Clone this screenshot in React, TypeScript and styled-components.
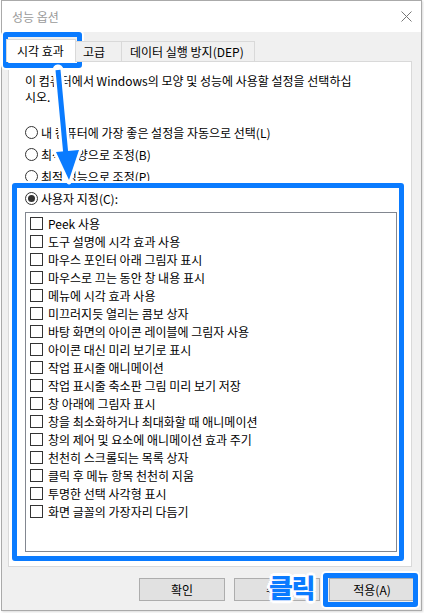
import React from 'react'
import styled, { createGlobalStyle } from 'styled-components'

const GlobalStyle = createGlobalStyle`
  html, body {
    margin: 0;
    padding: 0;
    background: #ffffff;
  }
  body {
    font-family: "Noto Sans CJK KR", "Noto Sans", sans-serif;
    font-size: 12px;
    color: #000;
  }
`

const BLUE = '#0a7bff'

const Page = styled.div`
  position: relative;
  width: 424px;
  height: 613px;
  overflow: hidden;
`

const Window = styled.div`
  box-sizing: border-box;
  margin-left: 1px;
  width: 421px;
  height: 611px;
  border: 1px solid #aaaaaa;
  display: flex;
  flex-direction: column;
  background: #f0f0f0;
  box-shadow: 1px 1px 2px rgba(0, 0, 0, 0.15);
`

const TitleBar = styled.div`
  height: 31px;
  background: #ffffff;
  display: flex;
  align-items: center;
  justify-content: space-between;
  padding: 0 9px 0 10px;
`

const Title = styled.span`
  color: #9a9a9a;
  font-size: 12px;
`

const Body = styled.div`
  flex: 1;
  display: flex;
  flex-direction: column;
  padding: 8px 9px 0 6px;
`

const Tabs = styled.div`
  display: flex;
  align-items: flex-end;
  height: 22px;
  margin-bottom: -1px;
  position: relative;
  z-index: 1;
`

const Tab = styled.div<{ $w: number; $pad: number; $active?: boolean }>`
  box-sizing: border-box;
  width: ${p => p.$w}px;
  height: ${p => (p.$active ? 23 : 21)}px;
  margin-left: ${p => (p.$active ? -2 : -1)}px;
  border: 1px solid #d9d9d9;
  border-bottom: ${p => (p.$active ? 'none' : '1px solid #d9d9d9')};
  background: ${p => (p.$active ? '#ffffff' : '#f0f0f0')};
  display: flex;
  align-items: center;
  padding: 0 0 ${p => (p.$active ? 2 : 0)}px ${p => p.$pad}px;
  white-space: nowrap;
  &:first-child {
    margin-left: -2px;
  }
`

const Panel = styled.div`
  box-sizing: border-box;
  height: 506px;
  background: #ffffff;
  border: 1px solid #d9d9d9;
  padding: 11px 14px 0 16px;
  display: flex;
  flex-direction: column;
`

const Desc = styled.p`
  margin: 0;
  line-height: 16px;
`

const RadioGroup = styled.div`
  margin-top: 16px;
  display: flex;
  flex-direction: column;
`

const RadioRow = styled.label`
  height: 22px;
  display: flex;
  align-items: center;
  gap: 3px;
  white-space: nowrap;
`

const RadioDot = styled.span<{ $checked?: boolean }>`
  box-sizing: border-box;
  width: 13px;
  height: 13px;
  border-radius: 50%;
  border: 1px solid #333333;
  background: #ffffff;
  display: flex;
  align-items: center;
  justify-content: center;
  flex-shrink: 0;
  &::after {
    content: '';
    width: 7px;
    height: 7px;
    border-radius: 50%;
    background: ${p => (p.$checked ? '#333333' : 'transparent')};
  }
`

const ListBox = styled.div`
  box-sizing: border-box;
  margin-top: 3px;
  width: 372px;
  height: 340px;
  border: 1px solid #828790;
  padding: 1px 0 0 4px;
  display: flex;
  flex-direction: column;
`

const CheckRow = styled.div`
  height: 18px;
  display: flex;
  align-items: center;
  gap: 5px;
  white-space: nowrap;
`

const CheckBox = styled.span`
  box-sizing: border-box;
  width: 13px;
  height: 13px;
  border: 1px solid #333333;
  background: #ffffff;
  flex-shrink: 0;
`

const Buttons = styled.div`
  display: flex;
  justify-content: flex-end;
  gap: 9px;
  margin-top: 11px;
  margin-right: -3px;
`

const Button = styled.div`
  box-sizing: border-box;
  width: 86px;
  height: 23px;
  background: #e1e1e1;
  border: 1px solid #adadad;
  display: flex;
  align-items: center;
  justify-content: center;
`

const Mark = styled.div<{ $x: number; $y: number; $w: number; $h: number }>`
  position: absolute;
  left: ${p => p.$x}px;
  top: ${p => p.$y}px;
  width: ${p => p.$w}px;
  height: ${p => p.$h}px;
  box-sizing: border-box;
  border: 5px solid ${BLUE};
  border-radius: 3px;
  box-shadow: 0 0 0 2px #ffffff;
  pointer-events: none;
`

const ClickLabel = styled.span`
  position: absolute;
  left: 269px;
  top: 569px;
  font-size: 26px;
  font-weight: 900;
  line-height: 36px;
  letter-spacing: -1.5px;
  color: ${BLUE};
  text-shadow:
    2px 0 0 #fff, -2px 0 0 #fff, 0 2px 0 #fff, 0 -2px 0 #fff,
    2px 2px 0 #fff, -2px -2px 0 #fff, 2px -2px 0 #fff, -2px 2px 0 #fff,
    3px 0 0 #fff, -3px 0 0 #fff, 0 3px 0 #fff, 0 -3px 0 #fff;
`

const ArrowLayer = styled.svg`
  position: absolute;
  left: 0;
  top: 0;
  pointer-events: none;
`

const options = [
  { label: '내 컴퓨터에 가장 좋은 설정을 자동으로 선택(L)' },
  { label: '최적 모양으로 조정(B)' },
  { label: '최적 성능으로 조정(P)' },
  { label: '사용자 지정(C):', checked: true },
]

const effects = [
  'Peek 사용',
  '도구 설명에 시각 효과 사용',
  '마우스 포인터 아래 그림자 표시',
  '마우스로 끄는 동안 창 내용 표시',
  '메뉴에 시각 효과 사용',
  '미끄러지듯 열리는 콤보 상자',
  '바탕 화면의 아이콘 레이블에 그림자 사용',
  '아이콘 대신 미리 보기로 표시',
  '작업 표시줄 애니메이션',
  '작업 표시줄 축소판 그림 미리 보기 저장',
  '창 아래에 그림자 표시',
  '창을 최소화하거나 최대화할 때 애니메이션',
  '창의 제어 및 요소에 애니메이션 효과 주기',
  '천천히 스크롤되는 목록 상자',
  '클릭 후 메뉴 항목 천천히 지움',
  '투명한 선택 사각형 표시',
  '화면 글꼴의 가장자리 다듬기',
]

const App = () => {
  return (
    <Page>
      <GlobalStyle />
      <Window>
        <TitleBar>
          <Title>성능 옵션</Title>
          <svg width="11" height="11" viewBox="0 0 11 11">
            <path d="M0.5 0.5 L10.5 10.5 M10.5 0.5 L0.5 10.5" stroke="#777" strokeWidth="1" />
          </svg>
        </TitleBar>
        <Body>
          <Tabs>
            <Tab $w={70} $pad={10} $active>시각 효과</Tab>
            <Tab $w={47} $pad={7}>고급</Tab>
            <Tab $w={134} $pad={8}>데이터 실행 방지(DEP)</Tab>
          </Tabs>
          <Panel>
            <Desc>
              이 컴퓨터에서 Windows의 모양 및 성능에 사용할 설정을 선택하십
              <br />
              시오.
            </Desc>
            <RadioGroup>
              {options.map(o => (
                <RadioRow key={o.label}>
                  <RadioDot $checked={o.checked} />
                  {o.label}
                </RadioRow>
              ))}
            </RadioGroup>
            <ListBox>
              {effects.map(e => (
                <CheckRow key={e}>
                  <CheckBox />
                  {e}
                </CheckRow>
              ))}
            </ListBox>
          </Panel>
          <Buttons>
            <Button>확인</Button>
            <Button>취소</Button>
            <Button>적용(A)</Button>
          </Buttons>
        </Body>
      </Window>

      <Mark $x={3} $y={32} $w={79} $h={36} />
      <Mark $x={12} $y={183} $w={392} $h={378} />
      <Mark $x={323} $y={573} $w={95} $h={34} />

      <ArrowLayer width="100" height="200" viewBox="0 0 100 200">
        <path d="M58 70 L66 156" stroke="#fff" strokeWidth="11" strokeLinecap="round" />
        <polygon points="55,151 80,149 69,182" fill="#fff" stroke="#fff" strokeWidth="5" strokeLinejoin="round" />
        <path d="M58 70 L66 156" stroke={BLUE} strokeWidth="5" />
        <polygon points="56,152 79,150 69,180" fill={BLUE} />
      </ArrowLayer>

      <ClickLabel>클릭</ClickLabel>
    </Page>
  )
}

export default App
